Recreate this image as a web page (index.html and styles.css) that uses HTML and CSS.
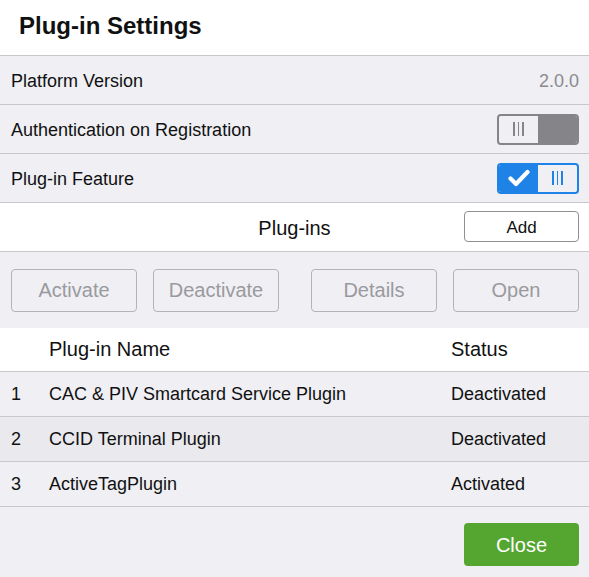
FILE: index.html
```html
<!DOCTYPE html>
<html>
<head>
<meta charset="utf-8">
<link rel="stylesheet" href="styles.css">
</head>
<body>
<div class="dialog">
  <div class="title">Plug-in Settings</div>
  <div class="row">
    <span class="label">Platform Version</span>
    <span class="value">2.0.0</span>
  </div>
  <div class="row">
    <span class="label">Authentication on Registration</span>
    <span class="toggle off">
      <span class="knob"><span class="grip"><i></i><i></i><i></i></span></span>
      <span class="fill"></span>
    </span>
  </div>
  <div class="row">
    <span class="label">Plug-in Feature</span>
    <span class="toggle on">
      <span class="fill">
        <svg width="22" height="18" viewBox="0 0 22 18"><path d="M2.5 9.5 L8 15 L19.5 3" fill="none" stroke="#fff" stroke-width="4.2" stroke-linecap="round" stroke-linejoin="round"/></svg>
      </span>
      <span class="knob"><span class="grip"><i></i><i></i><i></i></span></span>
    </span>
  </div>
  <div class="section">
    <span class="section-title">Plug-ins</span>
    <button class="btn add">Add</button>
  </div>
  <div class="actions">
    <button class="btn dis">Activate</button>
    <button class="btn dis">Deactivate</button>
    <button class="btn dis">Details</button>
    <button class="btn dis">Open</button>
  </div>
  <div class="table">
    <div class="tr head"><span class="c-num"></span><span class="c-name">Plug-in Name</span><span class="c-status">Status</span></div>
    <div class="tr"><span class="c-num">1</span><span class="c-name">CAC &amp; PIV Smartcard Service Plugin</span><span class="c-status">Deactivated</span></div>
    <div class="tr alt"><span class="c-num">2</span><span class="c-name">CCID Terminal Plugin</span><span class="c-status">Deactivated</span></div>
    <div class="tr"><span class="c-num">3</span><span class="c-name">ActiveTagPlugin</span><span class="c-status">Activated</span></div>
  </div>
  <div class="footer">
    <button class="btn close">Close</button>
  </div>
</div>
</body>
</html>
```
FILE: styles.css
```css
* { box-sizing: border-box; }
html, body { margin: 0; padding: 0; }
body {
  font-family: "Liberation Sans", Arial, sans-serif;
  font-size: 18px;
  color: #111;
  background: #efeff4;
  width: 589px;
  height: 577px;
  overflow: hidden;
}
.dialog { display: flex; flex-direction: column; height: 577px; }
.title {
  height: 56px;
  background: #fff;
  border-bottom: 1px solid #c8c7cc;
  font-weight: bold;
  font-size: 24px;
  padding: 12px 0 0 19px;
}
.row {
  height: 49px;
  border-bottom: 1px solid #c8c7cc;
  display: flex;
  align-items: center;
  justify-content: space-between;
  padding: 0 10px 0 11px;
  background: #efeff4;
}
.label { padding-top: 2px; }
.value { color: #8a8a8e; font-size: 18px; padding-top: 2px; }
.toggle {
  width: 82px;
  height: 31px;
  border-radius: 4px;
  border: 2px solid;
  display: flex;
  overflow: hidden;
}
.toggle .knob, .toggle .fill {
  width: 50%;
  height: 100%;
  display: flex;
  align-items: center;
  justify-content: center;
}
.toggle .knob { background: #efeff4; border-radius: 3px; }
.toggle.off { border-color: #858589; }
.toggle.off .fill { background: #858589; }
.toggle.on { border-color: #1e82e6; }
.toggle.on .fill { background: #1e82e6; }
.grip { display: flex; gap: 3px; }
.grip i { display: block; width: 1.5px; height: 14px; }
.off .grip i { background: #858589; }
.on .grip i { background: #1e82e6; }
.section {
  height: 49px;
  background: #fff;
  border-bottom: 1px solid #c8c7cc;
  display: flex;
  align-items: center;
  justify-content: flex-end;
  padding-right: 10px;
  position: relative;
}
.section-title {
  position: absolute;
  left: 0; right: 0;
  text-align: center;
  font-size: 20px;
  padding-top: 2px;
}
.btn {
  font-family: "Liberation Sans", Arial, sans-serif;
  font-size: 18px;
  border-radius: 4px;
  background: transparent;
  padding: 0;
  cursor: default;
}
.add {
  width: 115px;
  height: 31px;
  border: 1px solid #8e8e93;
  background: #fff;
  color: #111;
  position: relative;
  font-size: 17px;
  padding-top: 3px;
  margin-top: -2px;
}
.actions {
  height: 76px;
  display: flex;
  align-items: center;
  padding: 0 10px 0 11px;
  gap: 16px;
}
.actions .btn:nth-child(3) { margin-left: 16px; }
.dis {
  width: 126px;
  height: 43px;
  border: 1px solid #b4b4b8;
  color: #9a9a9e;
  font-size: 20px;
}
.tr {
  height: 45px;
  display: flex;
  align-items: center;
  border-bottom: 1px solid #c8c7cc;
  background: #efeff4;
  padding-top: 1px;
}
.tr.head { background: #fff; height: 44px; font-size: 20px; padding-top: 0; }
.tr.alt { background: #e9e9ee; }
.c-num { width: 49px; padding-left: 11px; }
.c-name { width: 402px; }
.c-status { flex: 1; }
.footer {
  flex: 1;
  display: flex;
  justify-content: flex-end;
  padding: 16px 10px 0 0;
}
.close {
  width: 115px;
  height: 43px;
  border: none;
  background: #55a630;
  color: #fff;
  font-size: 20px;
  padding-top: 2px;
}
```
